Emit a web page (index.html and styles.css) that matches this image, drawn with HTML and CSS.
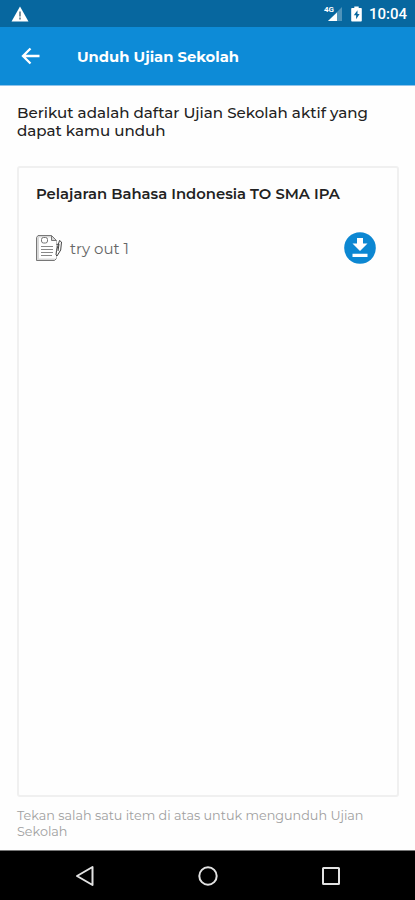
FILE: index.html
```html
<!DOCTYPE html>
<html lang="id">
  <head>
    <meta charset="UTF-8" />
    <meta name="viewport" content="width=device-width, initial-scale=1.0" />
    <title>Unduh Ujian Sekolah</title>
    <link rel="stylesheet" href="styles.css">
  </head>
  <body>
    <div class="statusbar">
      <svg class="warning" width="18" height="16" viewBox="0 0 18 16">
        <path d="M9 .5 17.500 15.500H.5Z" fill="#fff" />
        <path d="M9 5.500v5M9 11.500v2" stroke="#7d929f" stroke-width="2" />
      </svg>
      <div class="status-icons">
        <div class="signal">
          <svg width="20" height="16" viewBox="0 0 20 16">
            <path d="M19 1v14H5Z" fill="#4f93ba" />
            <path d="M14 6.500v8.500H5Z" fill="#fff" />
          </svg>
          <span class="network">4G</span>
        </div>
        <svg class="battery" width="11" height="16" viewBox="0 0 11 16">
          <path d="M3.300.5h4.400V2H10q.8 0 .8.8v11.900q0 .8-.8.8H1q-.8 0-.8-.8V2.800Q.2 2 1 2h2.300Z" fill="#fff" />
          <path d="M6.500 4.300 2.800 9.300h2.300v4l3.500-5.200H6.500Z" fill="#07679f" />
        </svg>
        <span class="time">10:04</span>
      </div>
    </div>

    <header class="appbar">
      <svg class="back" width="20" height="18" viewBox="0 0 20 18">
        <path d="M18.500 9H2.500M9.500 1.500 2 9l7.500 7.500" fill="none" stroke="#fff" stroke-width="2.300" />
      </svg>
      <h1>Unduh Ujian Sekolah</h1>
    </header>

    <main class="content">
      <p class="intro">Berikut adalah daftar Ujian Sekolah aktif yang<br>dapat kamu unduh</p>
      <section class="card">
        <h2>Pelajaran Bahasa Indonesia TO SMA IPA</h2>
        <div class="item">
          <svg class="paper" width="28" height="28" viewBox="0 0 28 28" fill="none" stroke="#777">
            <path d="M3 1.500h13.500l5 5v18l-2 2H1.500V3.500Z" fill="#d8d8d8" />
            <path d="M4 3.500h12.500v3h5v18H4Z" fill="#fff" stroke="none" />
            <path d="M16.500 1.500v5h5" />
            <rect x="6.500" y="3.500" width="6" height="5.500" rx="2" />
            <path d="M6 12.500h12M6 15.500h12M6 18.500h12M6 21.500h11" stroke="#888" />
            <path d="m24.500 6.500 2 1.500-.8 8-3.700 6-1-1 .5-4.500ZM21.500 10.500l2.500-.5-1 7" fill="#fff" stroke="#444" />
          </svg>
          <span class="name">try out 1</span>
          <button class="download" aria-label="Unduh">
            <svg width="32" height="32" viewBox="0 0 32 32">
              <circle cx="16" cy="16" r="15.800" fill="#0c87d2" />
              <path d="M13 6h6v5.500h4.500L16 19l-7.500-7.500H13ZM8.500 21.700h15v3.300h-15Z" fill="#fff" />
            </svg>
          </button>
        </div>
      </section>
      <p class="hint">Tekan salah satu item di atas untuk mengunduh Ujian<br>Sekolah</p>
    </main>

    <nav class="navbar">
      <svg width="20" height="22" viewBox="0 0 20 22">
        <path d="M17.500 2v18L2 11Z" fill="none" stroke="#e2e2e2" stroke-width="2" stroke-linejoin="round" />
      </svg>
      <svg width="20" height="20" viewBox="0 0 20 20">
        <circle cx="10" cy="10" r="8.700" fill="none" stroke="#e2e2e2" stroke-width="2" />
      </svg>
      <svg width="20" height="20" viewBox="0 0 20 20">
        <rect x="2" y="2" width="16" height="16" rx=".5" fill="none" stroke="#e2e2e2" stroke-width="2" />
      </svg>
    </nav>
  </body>
</html>
```

FILE: styles.css
```css
* {
  box-sizing: border-box;
}

body {
  margin: 0;
  height: 900px;
  display: flex;
  flex-direction: column;
  overflow: hidden;
  background: #fefefe;
  font-family: Montserrat, Inter, sans-serif;
  color: #222;
}

h1,
h2,
p {
  margin: 0;
  white-space: nowrap;
}

svg {
  display: block;
  flex-shrink: 0;
}

.statusbar {
  height: 27px;
  padding: 0 8px 0 11px;
  display: flex;
  align-items: center;
  justify-content: space-between;
  background: #07679f;
}

.status-icons {
  display: flex;
  align-items: center;
  color: #fff;
}

.signal {
  position: relative;
  margin-right: 8px;
}

.network {
  position: absolute;
  left: 1px;
  top: 0;
  font: bold 8px/7px Roboto, sans-serif;
}

.battery {
  margin-right: 7px;
}

.time {
  font: 500 15px/18px Roboto, sans-serif;
}

.appbar {
  height: 59px;
  padding-left: 21px;
  display: flex;
  align-items: center;
  background: #0d8bd7;
  border-bottom: 1px solid #8fc3ea;
}

.appbar h1 {
  margin-left: 36px;
  padding-top: 2px;
  color: #fff;
  font-size: 14.75px;
  font-weight: 700;
}

.content {
  flex: 1;
  padding: 18px 16px 0 17px;
  display: flex;
  flex-direction: column;
}

.intro {
  font-size: 15.1px;
  line-height: 18px;
  font-weight: 500;
}

.card {
  height: 631px;
  margin-top: 26px;
  padding: 16px 21px 0 16px;
  border: 2px solid #f0f0f0;
  border-radius: 3px;
}

.card h2 {
  padding-left: 1px;
  font-size: 14.8px;
  line-height: 20px;
  font-weight: 600;
}

.item {
  margin-top: 28px;
  display: flex;
  align-items: center;
}

.name {
  margin-left: 7px;
  color: #666;
  font-size: 15px;
}

.download {
  margin-left: auto;
  padding: 0;
  border: none;
  background: none;
  cursor: pointer;
}

.hint {
  margin-top: 11px;
  color: #a0a0a0;
  font-size: 12.75px;
  line-height: 16px;
}

.navbar {
  height: 50px;
  display: flex;
  align-items: center;
  justify-content: center;
  gap: 103px;
  background: #000;
  border-top: 1px solid #777;
}
```
